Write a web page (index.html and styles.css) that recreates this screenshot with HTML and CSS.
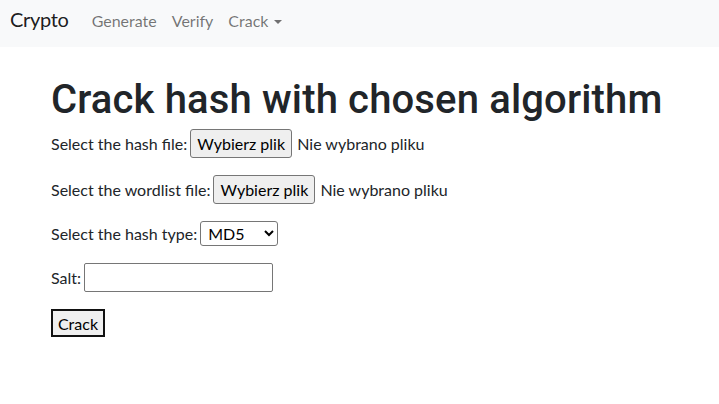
FILE: index.html
```html
<!DOCTYPE html>
<html lang="pl">
<head>
<meta charset="utf-8">
<title>Crypto - Crack</title>
<link rel="stylesheet" href="styles.css">
</head>
<body>
<nav class="navbar">
  <a class="brand" href="#">Crypto</a>
  <a class="nav-link" href="#">Generate</a>
  <a class="nav-link" href="#">Verify</a>
  <a class="nav-link dropdown" href="#">Crack<span class="caret"></span></a>
</nav>
<main class="content">
  <h1 class="title">Crack hash with chosen algorithm</h1>
  <form class="form">
    <div class="row row-file">
      <span class="label">Select the hash file:</span>
      <button type="button" class="btn file-btn">Wybierz plik</button>
      <span class="file-name">Nie wybrano pliku</span>
    </div>
    <div class="row row-file">
      <span class="label">Select the wordlist file:</span>
      <button type="button" class="btn file-btn">Wybierz plik</button>
      <span class="file-name">Nie wybrano pliku</span>
    </div>
    <div class="row row-select">
      <label class="label" for="ht">Select the hash type:</label>
      <select id="ht" class="select">
        <option>MD5</option>
        <option>SHA1</option>
        <option>SHA256</option>
      </select>
    </div>
    <div class="row row-input">
      <label class="label" for="salt">Salt:</label>
      <input id="salt" class="text-input" type="text">
    </div>
    <div class="row row-submit">
      <button type="button" class="btn submit-btn">Crack</button>
    </div>
  </form>
</main>
</body>
</html>
```
FILE: styles.css
```css
* { box-sizing: border-box; }
html, body { margin: 0; padding: 0; }
body {
  font-family: Lato, "Liberation Sans", sans-serif;
  font-size: 16px;
  line-height: 24px;
  color: #212529;
  background: #fff;
}
.navbar {
  display: flex;
  align-items: baseline;
  height: 47px;
  padding: 4px 10px 0;
  background: #f8f9fa;
}
.brand {
  font-size: 20px;
  line-height: 30px;
  letter-spacing: -0.3px;
  color: rgba(0,0,0,.9);
  text-decoration: none;
  margin-right: 15px;
}
.nav-link {
  padding: 0 8px;
  color: rgba(0,0,0,.55);
  text-decoration: none;
}
.nav-link + .nav-link { margin-left: -1px; }
.dropdown { display: inline-flex; align-items: center; margin-left: -2px; }
.caret {
  display: inline-block;
  width: 0;
  height: 0;
  margin-left: 6px;
  margin-top: 2px;
  border-top: 4px solid rgba(0,0,0,.55);
  border-left: 4px solid transparent;
  border-right: 4px solid transparent;
}
.content {
  padding: 29px 0 0 51px;
}
.title {
  margin: 0;
  font-family: Roboto, "Liberation Sans", sans-serif;
  font-weight: 500;
  font-size: 40px;
  line-height: 48px;
  letter-spacing: 0.15px;
  color: #212529;
}
.form {
  display: flex;
  flex-direction: column;
  gap: 17px;
  margin-top: 5px;
}
.row {
  display: flex;
  align-items: center;
}
.row-file, .row-input { height: 29px; }
.row-select { height: 25px; }
.row-submit { height: 28px; }
.label {
  padding-top: 1px;
  margin-right: 3px;
}
.btn {
  font-family: inherit;
  font-size: 16px;
  color: #000;
  background: #efefef;
  line-height: 24px;
  margin: 0;
  cursor: default;
}
.file-btn {
  width: 102px;
  height: 29px;
  padding: 1px 0 0;
  border: 1px solid #767676;
  border-radius: 3px;
  text-align: center;
}
.file-name {
  margin-left: 5px;
  padding-top: 1px;
}
.select {
  width: 78px;
  height: 25px;
  font-family: inherit;
  font-size: 16px;
  color: #000;
  background: #fff;
  border: 1px solid #767676;
  border-radius: 3px;
  padding: 0 0 0 3px;
  margin: 0;
}
.text-input {
  width: 189px;
  height: 29px;
  border: 1px solid #767676;
  border-radius: 2px;
  padding: 1px 2px;
  margin: 0;
  font-family: inherit;
  font-size: 16px;
  background: #fff;
}
.submit-btn {
  width: 54px;
  height: 28px;
  padding: 1px 0 0;
  border: 2px solid #111;
  border-radius: 0;
  text-align: center;
}
```
